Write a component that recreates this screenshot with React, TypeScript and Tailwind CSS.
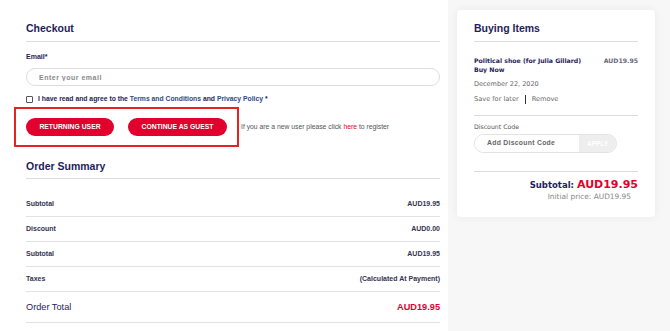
import { useState } from "react";

const rows = [
  { label: "Subtotal", value: "AUD19.95" },
  { label: "Discount", value: "AUD0.00" },
  { label: "Subtotal", value: "AUD19.95" },
  { label: "Taxes", value: "(Calculated At Payment)" },
];

const App = () => {
  const [email, setEmail] = useState("");
  const [agree, setAgree] = useState(false);

  return (
    <div className="flex min-h-[331px] w-[670px] bg-white font-['Liberation_Sans',Arial,sans-serif]">
      {/* left column */}
      <div className="w-[448px] shrink-0 pl-[26px] pr-[8px] pt-[21px]">
        <h1 className="text-[10.5px] leading-[14px] font-bold text-[#1f1d5c]">
          Checkout
        </h1>
        <div className="mt-[6px] h-px bg-[#dcdcdc]" />

        <label className="mt-[10px] block text-[7px] leading-[10px] font-bold text-[#1f1d5c]">
          Email*
        </label>
        <input
          value={email}
          onChange={(e) => setEmail(e.target.value)}
          placeholder="Enter your email"
          className="mt-[6px] block h-[18px] w-full rounded-full border border-[#dedede] px-[12px] text-[7px] font-bold tracking-[0.5px] text-[#333] outline-none placeholder:text-[#8a8a8a]"
        />

        <div className="mt-[8px] flex items-center gap-[5px] text-[6.8px] leading-[10px] font-bold text-[#1f1d5c]">
          <button
            onClick={() => setAgree(!agree)}
            className={`h-[7px] w-[7px] rounded-[1px] border border-[#555] ${agree ? "bg-[#1f1d5c]" : "bg-white"}`}
          />
          <span>
            I have read and agree to the{" "}
            <span className="text-[#2e4a8c]">Terms and Conditions</span> and{" "}
            <span className="text-[#2e4a8c]">Privacy Policy</span> *
          </span>
        </div>

        <div className="mt-[3px] flex items-center">
          <div className="-ml-[12px] flex gap-[14px] border-2 border-[#e8231f] py-[9px] pl-[10px] pr-[10px]">
            <button className="h-[18px] w-[88px] rounded-full bg-[#e2012d] text-[6.8px] font-bold text-white">
              RETURNING USER
            </button>
            <button className="h-[18px] w-[99px] rounded-full bg-[#e2012d] text-[6.8px] font-bold text-white">
              CONTINUE AS GUEST
            </button>
          </div>
          <p className="ml-[2px] text-[6.8px] text-[#555]">
            If you are a new user please click{" "}
            <span className="text-[#e2012d]">here</span> to register
          </p>
        </div>

        <h2 className="mt-[12px] text-[10.5px] leading-[14px] font-bold text-[#1f1d5c]">
          Order Summary
        </h2>
        <div className="mt-[5px] h-px bg-[#dcdcdc]" />

        <div className="mt-[13px]">
          {rows.map((r, i) => (
            <div
              key={i}
              className="flex h-[25px] items-center justify-between border-b border-[#e2e2e2] text-[7px] font-semibold text-[#34334f]"
            >
              <span>{r.label}</span>
              <span>{r.value}</span>
            </div>
          ))}
          <div className="flex h-[31px] items-center justify-between border-b border-[#e2e2e2] pt-[1px]">
            <span className="text-[9.2px] text-[#1f1d5c]">Order Total</span>
            <span className="text-[9.2px] font-bold text-[#e2012d]">
              AUD19.95
            </span>
          </div>
        </div>
      </div>

      {/* right column */}
      <div className="flex-1 bg-[#f7f7f8] pl-[9px] pt-[10px]">
        <div className="w-[198px] rounded-[4px] bg-white px-[17px] pt-[11px] pb-[16px] shadow-[0_0_10px_rgba(0,0,0,0.06)]">
          <h2 className="text-[10.5px] leading-[14px] font-bold text-[#1f1d5c]">
            Buying Items
          </h2>
          <div className="mt-[6px] h-px bg-[#dcdcdc]" />

          <div className="mt-[14px] flex justify-between font-['DejaVu_Sans',sans-serif] text-[6.2px] leading-[9px]">
            <div className="font-bold text-[#1f1d5c]">
              Political shoe (for Julia Gillard)
              <br />
              Buy Now
            </div>
            <div className="font-bold text-[#6a6a7a]">AUD19.95</div>
          </div>
          <div className="mt-[6px] font-['DejaVu_Sans',sans-serif] text-[6.5px] leading-[9px] text-[#666]">
            December 22, 2020
          </div>
          <div className="mt-[6px] flex items-center font-['DejaVu_Sans',sans-serif] text-[6.6px] leading-[9px] text-[#666]">
            <span>Save for later</span>
            <span className="mx-[6px] h-[9px] w-px bg-[#333]" />
            <span>Remove</span>
          </div>
          <div className="mt-[11px] h-px bg-[#dcdcdc]" />

          <div className="mt-[6px] font-['DejaVu_Sans',sans-serif] text-[6.2px] leading-[9px] text-[#555]">
            Discount Code
          </div>
          <div className="mt-[3px] flex h-[19px] w-[143px] overflow-hidden rounded-full border border-[#e2e2e2]">
            <input
              placeholder="Add Discount Code"
              className="w-[104px] bg-white px-[12px] text-[6.8px] font-bold tracking-[0.3px] text-[#333] outline-none placeholder:text-[#666]"
            />
            <button className="flex-1 bg-[#eeeeee] text-[6.5px] font-bold text-white">
              APPLY
            </button>
          </div>
          <div className="mt-[18px] h-px bg-[#dcdcdc]" />

          <div className="mt-[6px] flex items-baseline justify-end gap-[3px] font-['DejaVu_Sans',sans-serif] leading-[14px]">
            <span className="text-[8.5px] font-bold text-[#1f1d5c]">
              Subtotal:
            </span>
            <span className="text-[11px] font-bold text-[#e2012d]">
              AUD19.95
            </span>
          </div>
          <div className="pr-[7px] text-right font-['DejaVu_Sans',sans-serif] text-[7.4px] leading-[9px] text-[#888]">
            Initial price: AUD19.95
          </div>
        </div>
      </div>
    </div>
  );
};

export default App;
